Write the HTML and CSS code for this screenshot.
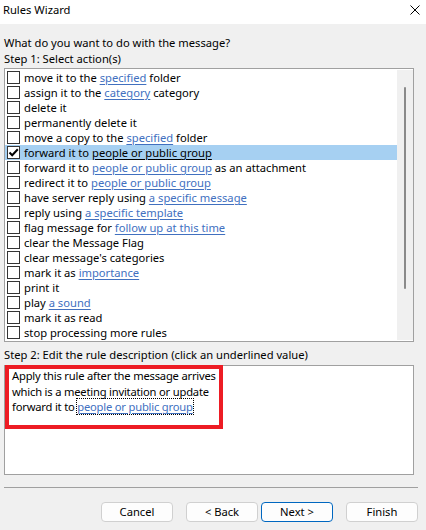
FILE: index.html
```html
<!DOCTYPE html>
<html>
<head>
<meta charset="utf-8">
<title>Rules Wizard</title>
<link rel="stylesheet" href="styles.css">
</head>
<body>
<div class="window">
  <div class="titlebar">
    <span class="title">Rules Wizard</span>
    <svg class="close" width="10" height="10" viewBox="0 0 10 10"><path d="M0.5 0.5 L9.5 9.5 M9.5 0.5 L0.5 9.5" stroke="#000" stroke-width="1" fill="none"/></svg>
  </div>
  <div class="content">
    <div class="label q">What do you want to do with the message?</div>
    <div class="label">Step 1: Select action(s)</div>
    <div class="listbox">
      <div class="rows">
        <div class="row"><span class="cb"></span><span>move it to the <a>specified</a> folder</span></div>
        <div class="row"><span class="cb"></span><span>assign it to the <a>category</a> category</span></div>
        <div class="row"><span class="cb"></span><span>delete it</span></div>
        <div class="row"><span class="cb"></span><span>permanently delete it</span></div>
        <div class="row"><span class="cb"></span><span>move a copy to the <a>specified</a> folder</span></div>
        <div class="row sel"><span class="cb"><svg width="11" height="11" viewBox="0 0 11 11"><path d="M1.5 5.5 L4.2 8.3 L9.8 2.2" stroke="#000" stroke-width="2" fill="none"/></svg></span><span>forward it to <a>people or public group</a></span></div>
        <div class="row"><span class="cb"></span><span>forward it to <a>people or public group</a> as an attachment</span></div>
        <div class="row"><span class="cb"></span><span>redirect it to <a>people or public group</a></span></div>
        <div class="row"><span class="cb"></span><span>have server reply using <a>a specific message</a></span></div>
        <div class="row"><span class="cb"></span><span>reply using <a>a specific template</a></span></div>
        <div class="row"><span class="cb"></span><span>flag message for <a>follow up at this time</a></span></div>
        <div class="row"><span class="cb"></span><span>clear the Message Flag</span></div>
        <div class="row"><span class="cb"></span><span>clear message's categories</span></div>
        <div class="row"><span class="cb"></span><span>mark it as <a>importance</a></span></div>
        <div class="row"><span class="cb"></span><span>print it</span></div>
        <div class="row"><span class="cb"></span><span>play <a>a sound</a></span></div>
        <div class="row"><span class="cb"></span><span>mark it as read</span></div>
        <div class="row"><span class="cb"></span><span>stop processing more rules</span></div>
      </div>
      <div class="scrollbar"><div class="thumb"></div></div>
    </div>
    <div class="label s2">Step 2: Edit the rule description (click an underlined value)</div>
    <div class="descbox">
      <div class="desc">
        <div>Apply this rule after the message arrives</div>
        <div>which is a meeting invitation or update</div>
        <div>forward it to <a class="focus">people or public group</a></div>
      </div>
      <div class="redmark"></div>
    </div>
    <div class="sep"></div>
    <div class="buttons">
      <button class="btn">Cancel</button>
      <div class="pair">
        <button class="btn">&lt; Back</button>
        <button class="btn primary">Next &gt;</button>
      </div>
      <button class="btn">Finish</button>
    </div>
  </div>
</div>
</body>
</html>
```
FILE: styles.css
```css
* { box-sizing: border-box; }
html, body { margin: 0; padding: 0; }
body {
  width: 426px;
  height: 530px;
  background: #f0f0f0;
  font-family: "Noto Sans", "Open Sans", sans-serif;
  font-size: 11.2px;
  color: #000;
  overflow: hidden;
}
.titlebar {
  height: 24px;
  background: #fff;
  display: flex;
  align-items: center;
  justify-content: space-between;
  padding: 0 6px 5px 3px;
}
.title { line-height: 16px; }
.content {
  padding: 11px 12px 0 4px;
  display: flex;
  flex-direction: column;
}
.label { line-height: 16px; height: 16px; white-space: nowrap; }
.listbox {
  margin-top: 1px;
  height: 274px;
  border: 1px solid #a0a0a0;
  background: #fff;
  display: flex;
  padding: 1px 0 1px 0;
}
.rows { flex: 1; display: flex; flex-direction: column; }
.row {
  height: 15px;
  display: flex;
  align-items: center;
  padding-left: 2px;
  gap: 4px;
  white-space: nowrap;
  line-height: 15px;
}
.row.sel { background: #a6d0f2; }
.cb {
  width: 13px;
  height: 13px;
  border: 1px solid #333;
  background: #fff;
  flex: none;
  display: flex;
  align-items: center;
  justify-content: center;
}
a {
  color: #4170bf;
  text-decoration: underline;
  text-underline-offset: 2px;
}
.row.sel a { color: #000; }
.scrollbar {
  width: 16px;
  background: #f0f0f0;
  display: flex;
  justify-content: center;
  padding-top: 17px;
}
.thumb {
  width: 2px;
  height: 202px;
  background: #8a8a8a;
  border-radius: 1px;
}
.s2 { margin-top: 5px; }
.descbox {
  margin-top: 2px;
  height: 110px;
  border: 1px solid #a0a0a0;
  background: #fff;
  position: relative;
}
.desc {
  padding: 2px 0 0 7px;
  line-height: 15.5px;
  white-space: nowrap;
  letter-spacing: -0.2px;
}
.focus { outline: 1px dotted #000; outline-offset: 0; }
.redmark {
  position: absolute;
  left: 0;
  top: -1px;
  width: 218px;
  height: 64px;
  border: 4px solid #ed1c24;
}
.sep {
  margin-top: 12px;
  height: 1px;
  background: #a0a0a0;
  margin-right: -4px;
}
.buttons {
  margin-top: 14px;
  margin-right: -4px;
  display: flex;
  justify-content: flex-end;
  gap: 13px;
}
.pair { display: flex; gap: 3px; }
.btn {
  width: 72px;
  height: 20px;
  border: 1px solid #d0d0d0;
  border-radius: 4px;
  background: #fdfdfd;
  font-family: inherit;
  font-size: 11.2px;
  color: #000;
  padding: 0;
  line-height: 18px;
}
.btn.primary { border-color: #0067c0; }
```
